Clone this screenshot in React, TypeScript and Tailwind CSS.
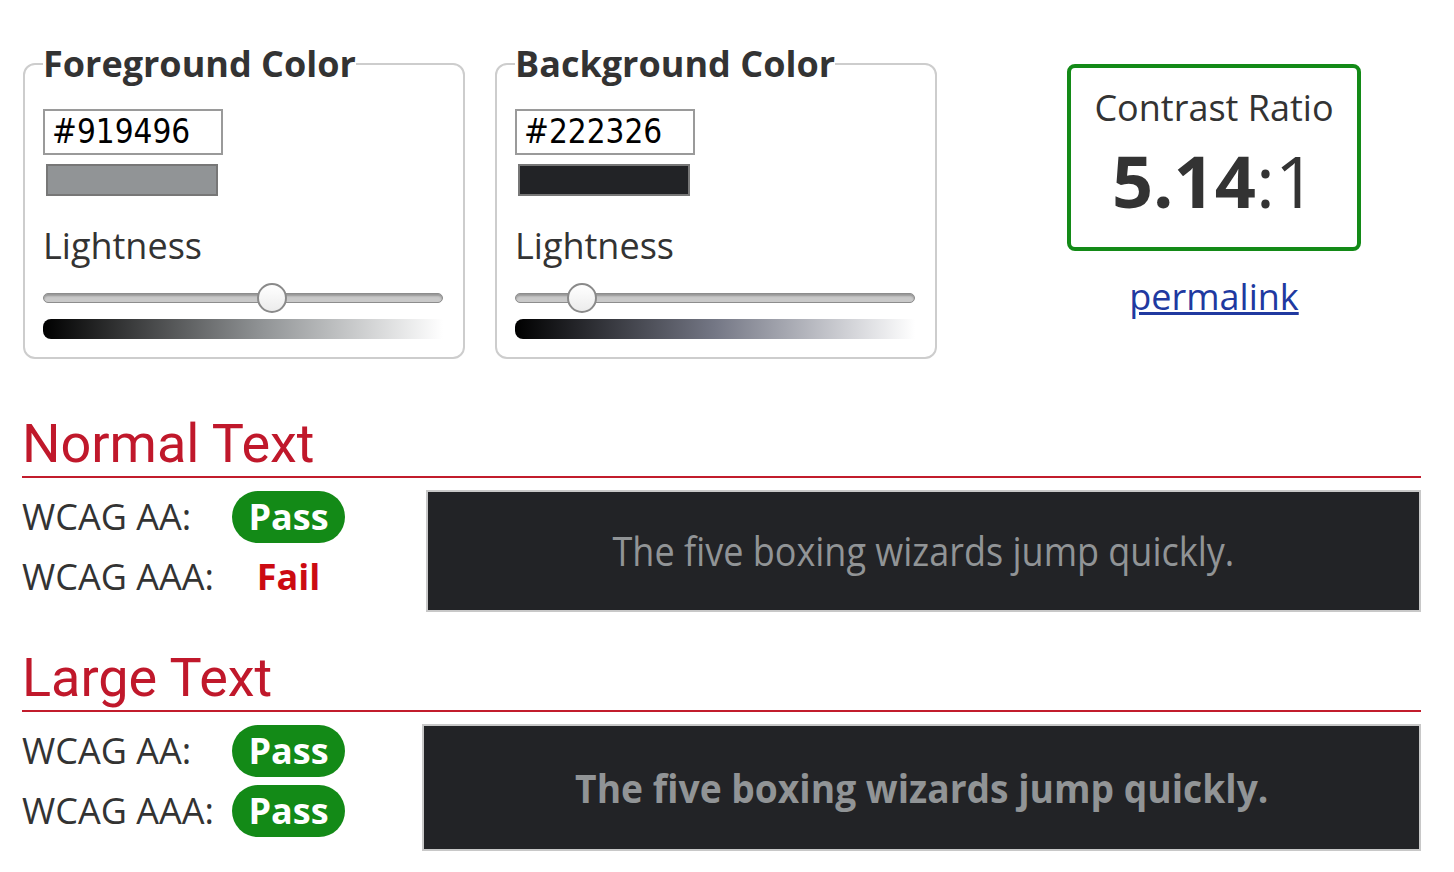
const FG = "#919496";
const BG = "#222326";

function Slider({ pct }: { pct: number }) {
  return (
    <div className="relative mt-[16px] h-[30px] w-[400px]">
      <div className="absolute left-0 right-0 top-[10px] h-[10px] rounded-full border border-[#8d8d8d] bg-[#c9c9c9] shadow-[inset_0_2px_2px_rgba(0,0,0,0.25)]" />
      <div
        className="absolute top-0 h-[30px] w-[30px] rounded-full border-2 border-[#8a8a8a] bg-gradient-to-b from-white to-[#ececec]"
        style={{ left: `${pct * 370}px` }}
      />
    </div>
  );
}

function ColorPanel({
  title,
  value,
  pct,
  gradient,
  className,
}: {
  title: string;
  value: string;
  pct: number;
  gradient: string;
  className?: string;
}) {
  return (
    <fieldset className={`w-[442px] rounded-xl border-2 border-[#cdcdcd] px-[18px] pb-[18px] ${className ?? ""}`}>
      <legend className="px-0 text-[36px] font-bold leading-[42px] text-[#333]">{title}</legend>
      <div className="mt-[24px] flex h-[46px] w-[180px] items-center border-2 border-[#9a9a9a] px-[7px] font-['DejaVu_Sans'] text-[33px] font-stretch-condensed text-black">
        {value}
      </div>
      <div className="ml-[3px] mt-[9px] h-[32px] w-[172px] border-2 border-[#777]" style={{ backgroundColor: value }} />
      <div className="mt-[29px] text-[36px] leading-[42px]">Lightness</div>
      <Slider pct={pct} />
      <div className="mt-[6px] h-[20px] w-[400px] rounded-l-lg" style={{ background: gradient }} />
    </fieldset>
  );
}

function Badge({ ok }: { ok: boolean }) {
  if (!ok) {
    return (
      <div className="flex h-[52px] w-[113px] items-center justify-center text-[36px] font-bold text-[#cc0a12]">Fail</div>
    );
  }
  return (
    <div className="flex h-[52px] w-[113px] items-center justify-center rounded-full bg-[#138a17] text-[36px] font-bold text-white">
      Pass
    </div>
  );
}

function Section({
  title,
  aaa,
  large,
}: {
  title: string;
  aaa: boolean;
  large?: boolean;
}) {
  return (
    <div>
      <h2 className="border-b-2 border-[#c21c2c] font-['Roboto'] text-[54px] leading-[64px] text-[#c0182b]">{title}</h2>
      <div className="mt-[12px] flex items-start">
        <div className="flex flex-col gap-[6px]">
          <div className="flex items-center">
            <span className="w-[210px] text-[36px]">WCAG AA:</span>
            <Badge ok />
          </div>
          <div className="flex items-center">
            <span className="w-[210px] text-[36px]">WCAG AAA:</span>
            <Badge ok={aaa} />
          </div>
        </div>
        <div
          className={`flex flex-1 items-center justify-center overflow-hidden border-2 border-[#c8c8c8] bg-[#222326] text-[40px] text-[#919496] ${
            large ? "ml-[77px] h-[127px] font-bold" : "ml-[81px] h-[122px]"
          }`}
        >
          <span className={`inline-block whitespace-nowrap ${large ? "scale-x-[0.93]" : "scale-x-[0.9]"}`}>
            The five boxing wizards jump quickly.
          </span>
        </div>
      </div>
    </div>
  );
}

export default function App() {
  return (
    <div className="min-h-screen bg-white pl-[22px] pr-[33px] pt-[43px] font-['Open_Sans',sans-serif] text-[#333]">
      <div className="flex items-start">
        <ColorPanel
          title="Foreground Color"
          value={FG}
          pct={0.578}
          gradient="linear-gradient(to right, #000, #919496 55%, #fff)"
          className="ml-px"
        />
        <ColorPanel
          title="Background Color"
          value={BG}
          pct={0.14}
          gradient="linear-gradient(to right, #000, #747785 50%, #fff)"
          className="ml-[30px]"
        />
        <div className="ml-[130px] mt-[21px] flex w-[294px] flex-col items-center">
          <div className="flex h-[187px] w-[294px] flex-col items-center rounded-lg border-4 border-[#138a17] pt-[19px]">
            <div className="text-[36px] leading-[42px]">Contrast Ratio</div>
            <div className="mt-[16px] text-[72px] leading-[70px]">
              <span className="font-bold">5.14</span>:1
            </div>
          </div>
          <a href="#" className="mt-[25px] text-[36px] leading-[42px] text-[#2039a0] underline">
            permalink
          </a>
        </div>
      </div>
      <div className="mt-[53px]">
        <Section title="Normal Text" aaa={false} />
      </div>
      <div className="mt-[34px]">
        <Section title="Large Text" aaa large />
      </div>
    </div>
  );
}
